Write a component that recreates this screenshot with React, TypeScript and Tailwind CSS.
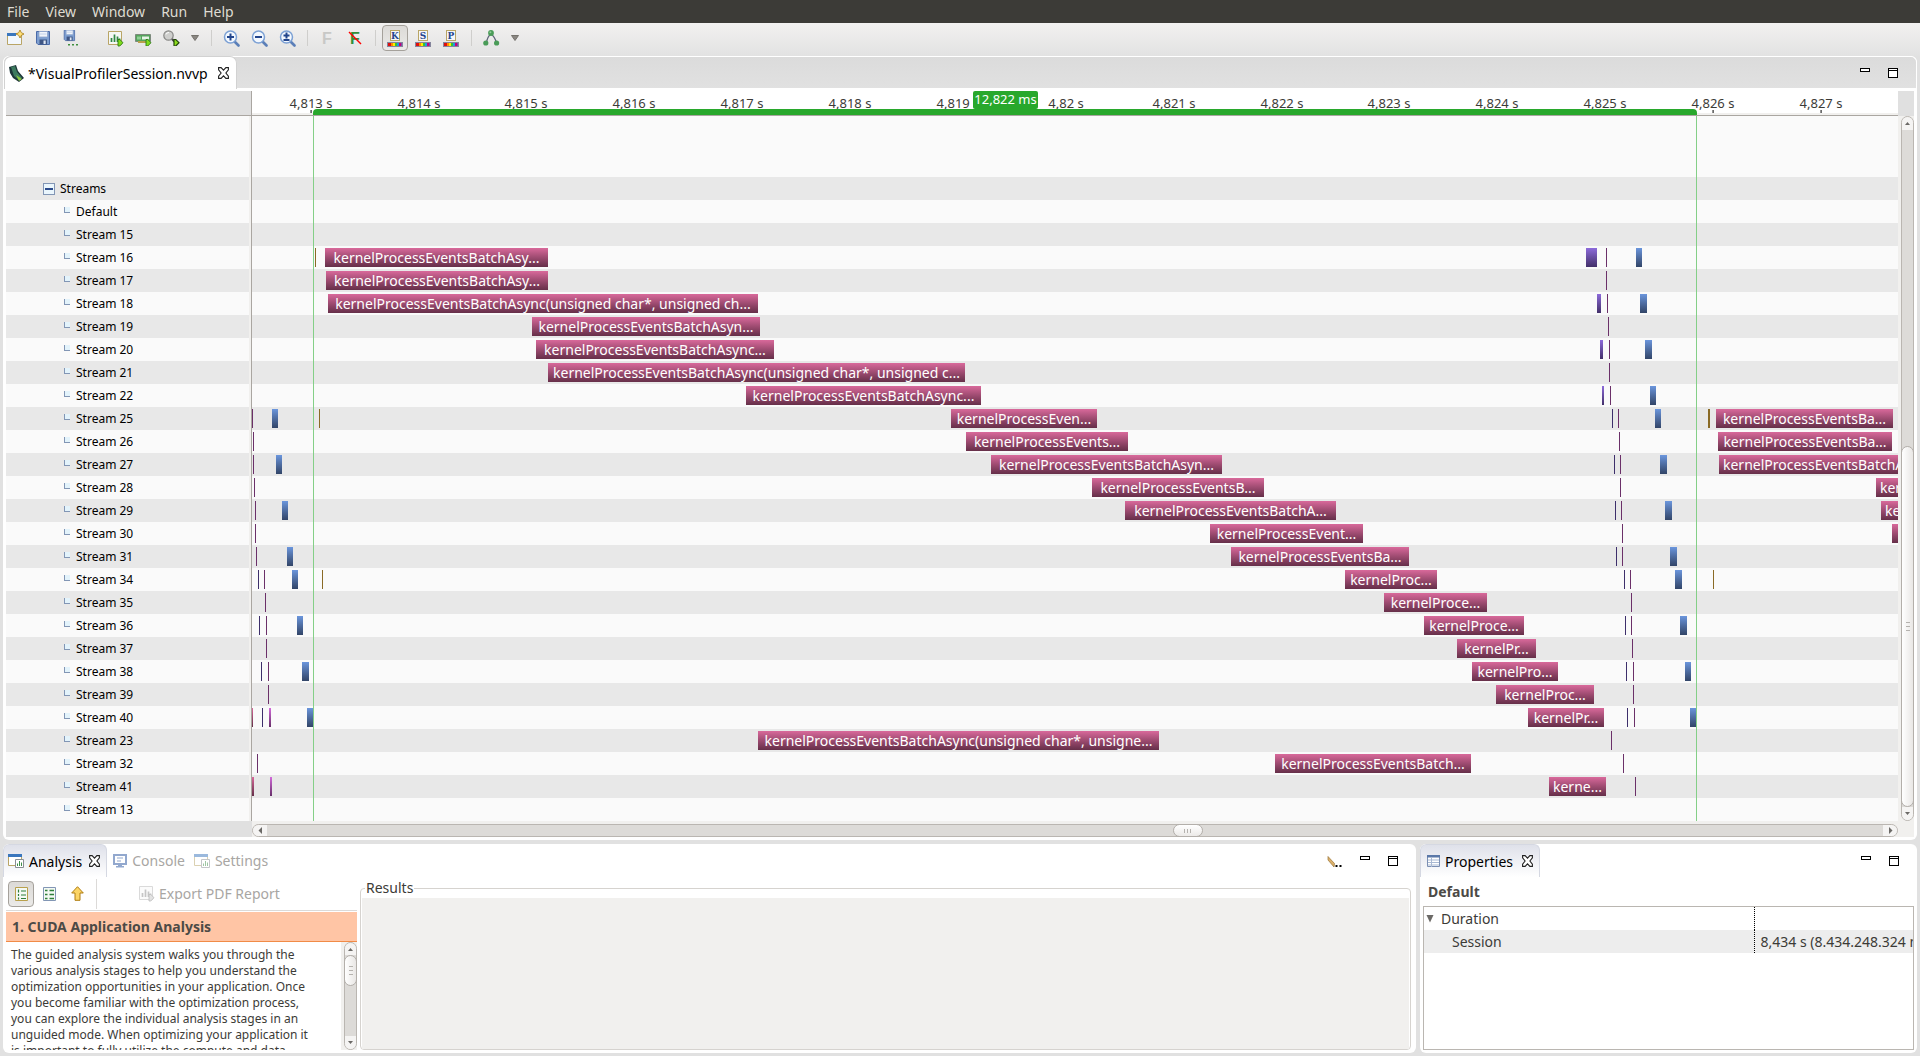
import React from "react";

type Kind = "kernel" | "h2d" | "d2h" | "memset" | "lineA" | "lineB" | "lineC";
type Bar = [start: number, end: number, kind: Kind, label?: string, align?: "left"];

const LANE_START = 252;
const LANE_SPAN = 1646;

const kindClass: Record<Kind, string> = {
  kernel: "bg-linear-to-b from-[#d9699b] to-[#662f49]",
  h2d: "bg-linear-to-b from-[#8d6bdb] to-[#43306a]",
  d2h: "bg-linear-to-b from-[#6b96dd] to-[#324568]",
  memset: "bg-linear-to-b from-[#d36bdb] to-[#682f6a]",
  lineA: "bg-[#6b3069]",
  lineB: "bg-[#3d2f6b]",
  lineC: "bg-[#8a6a25]",
};

const K = "kernelProcess";

const streams: { name: string; bars: Bar[] }[] = [
  { name: "Default", bars: [] },
  { name: "Stream 15", bars: [] },
  { name: "Stream 16", bars: [[315, 316, "lineC"], [325, 548, "kernel", K + "EventsBatchAsy..."], [1586, 1597, "h2d"], [1606, 1607, "lineA"], [1636, 1642, "d2h"]] },
  { name: "Stream 17", bars: [[326, 548, "kernel", K + "EventsBatchAsy..."], [1606, 1607, "lineA"]] },
  { name: "Stream 18", bars: [[328, 758, "kernel", K + "EventsBatchAsync(unsigned char*, unsigned ch..."], [1597, 1601, "h2d"], [1607, 1608, "lineA"], [1640, 1647, "d2h"]] },
  { name: "Stream 19", bars: [[532, 760, "kernel", K + "EventsBatchAsyn..."], [1608, 1609, "lineA"]] },
  { name: "Stream 20", bars: [[536, 774, "kernel", K + "EventsBatchAsync..."], [1600, 1603, "h2d"], [1609, 1610, "lineA"], [1645, 1652, "d2h"]] },
  { name: "Stream 21", bars: [[548, 965, "kernel", K + "EventsBatchAsync(unsigned char*, unsigned c..."], [1609, 1610, "lineA"]] },
  { name: "Stream 22", bars: [[746, 981, "kernel", K + "EventsBatchAsync..."], [1602, 1604, "h2d"], [1610, 1611, "lineA"], [1650, 1656, "d2h"]] },
  { name: "Stream 25", bars: [[252, 253, "lineA"], [272, 278, "d2h"], [319, 320, "lineC"], [951, 1097, "kernel", K + "Even..."], [1612, 1613, "lineB"], [1618, 1619, "lineA"], [1655, 1661, "d2h"], [1708, 1710, "lineC"], [1716, 1893, "kernel", K + "EventsBa..."]] },
  { name: "Stream 26", bars: [[253, 254, "lineA"], [966, 1128, "kernel", K + "Events..."], [1619, 1620, "lineA"], [1718, 1892, "kernel", K + "EventsBa..."]] },
  { name: "Stream 27", bars: [[253, 254, "lineA"], [276, 282, "d2h"], [991, 1222, "kernel", K + "EventsBatchAsyn..."], [1614, 1615, "lineB"], [1620, 1621, "lineA"], [1660, 1667, "d2h"], [1719, 1960, "kernel", K + "EventsBatchAsyn...", "left"]] },
  { name: "Stream 28", bars: [[254, 255, "lineA"], [1092, 1264, "kernel", K + "EventsB..."], [1620, 1621, "lineA"], [1876, 2040, "kernel", K + "EventsB...", "left"]] },
  { name: "Stream 29", bars: [[255, 256, "lineA"], [282, 288, "d2h"], [1125, 1336, "kernel", K + "EventsBatchA..."], [1615, 1616, "lineB"], [1621, 1622, "lineA"], [1665, 1672, "d2h"], [1881, 2040, "kernel", K + "Events...", "left"]] },
  { name: "Stream 30", bars: [[255, 256, "lineA"], [1210, 1363, "kernel", K + "Event..."], [1622, 1623, "lineA"], [1892, 2040, "kernel"]] },
  { name: "Stream 31", bars: [[256, 257, "lineA"], [287, 293, "d2h"], [1231, 1409, "kernel", K + "EventsBa..."], [1616, 1617, "lineB"], [1622, 1623, "lineA"], [1670, 1677, "d2h"]] },
  { name: "Stream 34", bars: [[258, 259, "lineB"], [264, 265, "lineA"], [292, 298, "d2h"], [322, 323, "lineC"], [1345, 1437, "kernel", "kernelProc..."], [1624, 1625, "lineB"], [1630, 1631, "lineA"], [1675, 1682, "d2h"], [1713, 1714, "lineC"]] },
  { name: "Stream 35", bars: [[265, 266, "lineA"], [1384, 1487, "kernel", "kernelProce..."], [1631, 1632, "lineA"]] },
  { name: "Stream 36", bars: [[259, 260, "lineB"], [266, 267, "lineA"], [297, 303, "d2h"], [1424, 1524, "kernel", "kernelProce..."], [1625, 1626, "lineB"], [1631, 1632, "lineA"], [1680, 1687, "d2h"]] },
  { name: "Stream 37", bars: [[266, 267, "lineA"], [1457, 1536, "kernel", "kernelPr..."], [1632, 1633, "lineA"]] },
  { name: "Stream 38", bars: [[261, 262, "lineB"], [268, 269, "lineA"], [302, 309, "d2h"], [1472, 1558, "kernel", "kernelPro..."], [1626, 1627, "lineB"], [1633, 1634, "lineA"], [1685, 1691, "d2h"]] },
  { name: "Stream 39", bars: [[268, 269, "lineA"], [1496, 1594, "kernel", "kernelProc..."], [1633, 1634, "lineA"]] },
  { name: "Stream 40", bars: [[252, 253, "kernel"], [262, 263, "lineB"], [269, 271, "memset"], [307, 313, "d2h"], [1528, 1604, "kernel", "kernelPr..."], [1627, 1628, "lineB"], [1634, 1635, "lineA"], [1690, 1696, "d2h"]] },
  { name: "Stream 23", bars: [[758, 1159, "kernel", K + "EventsBatchAsync(unsigned char*, unsigne..."], [1611, 1612, "lineA"]] },
  { name: "Stream 32", bars: [[257, 258, "lineA"], [1275, 1471, "kernel", K + "EventsBatch..."], [1623, 1624, "lineA"]] },
  { name: "Stream 41", bars: [[252, 254, "kernel"], [270, 272, "memset"], [1549, 1606, "kernel", "kerne..."], [1635, 1636, "lineA"]] },
  { name: "Stream 13", bars: [] },
];

const ticks: [number, string][] = [
  [311, "4,813 s"], [419, "4,814 s"], [526, "4,815 s"], [634, "4,816 s"], [742, "4,817 s"], [850, "4,818 s"],
  [958, "4,819 s"], [1066, "4,82 s"], [1174, "4,821 s"], [1282, "4,822 s"], [1389, "4,823 s"], [1497, "4,824 s"],
  [1605, "4,825 s"], [1713, "4,826 s"], [1821, "4,827 s"],
];

const pct = (x: number) => `${((x - LANE_START) / LANE_SPAN) * 100}%`;
const span = (a: number, b: number) => ({ left: pct(a), width: `${((b - a) / LANE_SPAN) * 100}%` });

function Tool({ label, active, disabled, children }: { label: string; active?: boolean; disabled?: boolean; children: React.ReactNode }) {
  return (
    <button
      type="button"
      aria-label={label}
      disabled={disabled}
      className={
        active
          ? "mx-px flex h-[26px] w-[26px] items-center justify-center rounded-[4px] border border-[#a5a19b] bg-linear-to-b from-[#dcdad7] to-[#ebeae8]"
          : "flex h-[26px] w-7 items-center justify-center"
      }
    >
      {children}
    </button>
  );
}

const Sep = () => (
  <span className="flex w-3 justify-center">
    <span className="h-4 w-px bg-[#cfcecc]" />
  </span>
);

const MenuArrow = ({ label }: { label: string }) => (
  <button type="button" aria-label={label} className="flex h-[26px] w-5 items-center justify-center">
    <svg width="8" height="6" viewBox="0 0 8 6"><path d="M.5.5h7L4 5.5z" fill="#8a8782" stroke="#75726d" /></svg>
  </button>
);

const Floppy = ({ small }: { small?: boolean }) => (
  <svg width="16" height="16" viewBox="0 0 16 16">
    <g transform={small ? "translate(0 -1) scale(.8)" : "translate(0 0)"}>
      <path d="M1.5 1.5h13v13H3l-1.5-1.5z" fill="#7e9fd0" stroke="#4a6aa8" />
      <path d="M4 1.5h8.5v5.5H4z" fill="#f1f5fb" stroke="#8fa5cc" strokeWidth=".8" />
      <path d="M5 4h6.5" stroke="#c4d2ea" />
      <path d="M4.5 9.5h7.5v5H4.5z" fill="#3f5684" />
      <path d="M8.5 10.5h2.200v3.5H8.5z" fill="#dfe7f3" />
    </g>
    {small && <path d="M5 14h2v1.600H5zM9 14h2v1.600H9zM13 14h2v1.600h-2z" fill="#3f8f3f" />}
  </svg>
);

const PlayBadge = () => <path d="M11 9.500h1.800L16 12.700 12.800 16H11z" fill="#7fdc1c" stroke="#2c7a16" strokeWidth=".9" />;

const ZoomIcon = ({ d }: { d: string }) => (
  <svg width="17" height="17" viewBox="0 0 17 17">
    <path d="M11.5 11.5L15.5 15.5" stroke="#5b7fb8" strokeWidth="2.600" strokeLinecap="round" />
    <circle cx="7.5" cy="7" r="6" fill="#f3f8fe" stroke="#7ba0d4" strokeWidth="1.500" />
    <path d={d} stroke="#22458c" strokeWidth="2" />
  </svg>
);

const ColorByIcon = ({ letter }: { letter: string }) => (
  <svg width="16" height="17" viewBox="0 0 16 17">
    <rect x="3.5" y=".5" width="9" height="10" fill="#f4f6fa" stroke="#b9a566" />
    <text x="8" y="9" textAnchor="middle" fontFamily="DejaVu Serif, serif" fontWeight="700" fontSize="9" fill="#25478f">{letter}</text>
    <rect x="0" y="12" width="16" height="5" fill="#85859c" />
    <path d="M1 13h3v3H1z" fill="#e00f0f" />
    <path d="M4 13h2v3H4z" fill="#ff8b00" />
    <path d="M6 13h2v3H6z" fill="#ffee00" />
    <path d="M8 13h2v3H8z" fill="#35c435" />
    <path d="M10 13h2v3h-2z" fill="#1c9be0" />
    <path d="M12 13h2v3h-2z" fill="#c4007a" />
    <path d="M14 13h1v3h-1z" fill="#7d4aa8" />
  </svg>
);

const FilterF = ({ on }: { on?: boolean }) => (
  <svg width="16" height="16" viewBox="0 0 16 16">
    <text x="8" y="14" textAnchor="middle" fontFamily="Liberation Sans, sans-serif" fontWeight="700" fontSize="16" fill={on ? "#2f8f3a" : "#c8c8c6"}>F</text>
    {on && <path d="M2 2L14 14" stroke="#f00" strokeWidth="1.400" />}
  </svg>
);

const CloseX = () => (
  <svg width="11" height="12" viewBox="0 0 11 12">
    <path d="M.6.6h2.500L5.500 3.200 7.900.6h2.500v2.300L7.900 6l2.500 3.100v2.300H7.900L5.500 8.800 3.100 11.400H.6V9.100L3.100 6 .6 2.900z" fill="#fff" stroke="#222" strokeWidth="1.100" />
  </svg>
);

const WindowButtons = () => (
  <div className="flex items-start gap-[18px] pr-[18px]">
    <button type="button" aria-label="Minimize" className="h-1 w-[10px] border border-black bg-white" />
    <button type="button" aria-label="Maximize" className="flex h-[10px] w-[10px] items-start border border-black bg-white pt-px">
      <span className="h-px w-full bg-black" />
    </button>
  </div>
);

const Arrow = ({ d }: { d: string }) => (
  <svg width="7" height="7" viewBox="0 0 7 7"><path d={d} fill="#6b6966" /></svg>
);

const UP = "M1 5h5L3.500 2z";
const DOWN = "M1 2h5L3.500 5z";
const LEFT = "M5 0v7L1.500 3.500z";
const RIGHT = "M2 0v7l3.500-3.500z";

const GripV = () => (
  <span className="flex flex-col gap-[3px]">
    <span className="h-px w-[4px] bg-[#b5b2ae]" />
    <span className="h-px w-[4px] bg-[#b5b2ae]" />
    <span className="h-px w-[4px] bg-[#b5b2ae]" />
  </span>
);

function AnalysisIcon({ faded }: { faded?: boolean }) {
  return (
    <svg width="16" height="14" viewBox="0 0 16 14" className={faded ? "opacity-50" : ""}>
      <path d="M.5.5h13v11H.5z" fill="#fff" stroke="#b9a566" />
      <path d="M0 0h14v3H0z" fill="#3a76bd" />
      <path d="M7.5 5.5h8v8h-8z" fill="#fff" stroke="#8a8f94" />
      <path d="M9.5 12V9.5M11.5 12V7M13.5 12V8.5" stroke="#3f8f4a" />
    </svg>
  );
}

function ReportIcon({ faded }: { faded?: boolean }) {
  return (
    <svg width="17" height="17" viewBox="0 0 17 17" className={faded ? "opacity-40 grayscale" : ""}>
      <path d="M1.5 1.5h13v13h-13z" fill="#f5f8f5" stroke="#b9a566" />
      <path d="M4.5 12V8M7.5 12V4.5M10.5 12V6.5M12.5 12V8.5" stroke="#2f8745" strokeWidth="1.700" />
      <PlayBadge />
    </svg>
  );
}

function ListIcon({ numbered }: { numbered?: boolean }) {
  return (
    <svg width="15" height="16" viewBox="0 0 15 16">
      <path d="M1.5 1.5h12v13h-12z" fill="#f4f9f4" stroke={numbered ? "#b9a04c" : "#8296b5"} />
      {numbered ? (
        <path d="M4.500 3.500v3M4.500 8v2M4.500 11.500v2M7 5h5M7 9h5M7 12.500h5" stroke="#2f7f3a" strokeWidth="1.200" />
      ) : (
        <path d="M3 4.500h2.500M3 8.500h2.500M3 12.500h2.500M7.500 4.500H12M7.500 8.500H12M7.500 12.500H12" stroke="#2f7f3a" strokeWidth="1.600" />
      )}
    </svg>
  );
}

export default function App() {
  return (
    <div className="flex min-h-screen flex-col overflow-hidden bg-[#e1e1e1] font-['Noto_Sans','Open_Sans',sans-serif] text-[14px] text-[#3c3b37]">
      <nav className="flex h-[23px] shrink-0 items-center gap-4 bg-[#3c3b37] pl-[7px] text-[#dfdbd2]">
        {["File", "View", "Window", "Run", "Help"].map((m) => (
          <button key={m} type="button">{m}</button>
        ))}
      </nav>

      <div role="toolbar" aria-label="Main" className="flex h-[33px] shrink-0 items-center bg-linear-to-b from-[#f2f1f0] to-[#e2e2e2] pb-[3px] pl-px">
        <Tool label="New session">
          <svg width="17" height="16" viewBox="0 0 17 16">
            <path d="M.5 3.500h14v11H.5z" fill="#f2f7fd" stroke="#b9a566" />
            <path d="M0 3h9v3H0z" fill="#3a76bd" />
            <path d="M13 0l1.300 2.700L17 4l-2.700 1.300L13 8l-1.300-2.700L9 4l2.700-1.300z" fill="#ffe27a" stroke="#a87a14" strokeWidth=".8" />
          </svg>
        </Tool>
        <Tool label="Save"><Floppy /></Tool>
        <Tool label="Save as"><Floppy small /></Tool>
        <span className="w-4" />
        <Tool label="Run report"><ReportIcon /></Tool>
        <Tool label="Run device">
          <svg width="17" height="16" viewBox="0 0 17 16">
            <path d="M.5 4.500h15v7H.5z" fill="#55a35c" stroke="#7d8a7d" />
            <path d="M7 6.500h7v3H7z" fill="#e7f3e7" />
            <path d="M2 6.500h4v3H2z" fill="#8fd094" />
            <path d="M3 12h8" stroke="#b9a04c" strokeWidth="2" />
            <PlayBadge />
          </svg>
        </Tool>
        <Tool label="Run analysis">
          <svg width="17" height="16" viewBox="0 0 17 16">
            <path d="M8.500 8.500L12 12" stroke="#444" strokeWidth="2.200" />
            <circle cx="5.500" cy="5.500" r="4.700" fill="#cfcfcd" stroke="#888886" strokeWidth="1.200" />
            <path d="M3 4.500a3 3 0 013-2" stroke="#fff" fill="none" />
            <path d="M11 9.500h1.800L16 12.700 12.800 16H11z" fill="#8cdc1c" stroke="#24470c" strokeWidth="1.200" />
          </svg>
        </Tool>
        <MenuArrow label="Analysis options" />
        <Sep />
        <Tool label="Zoom in"><ZoomIcon d="M4 7h7M7.500 3.500v7" /></Tool>
        <Tool label="Zoom out"><ZoomIcon d="M4 7h7" /></Tool>
        <Tool label="Zoom to fit"><ZoomIcon d="M4.500 5.500h6M7.500 2.500v6M4.500 10h6" /></Tool>
        <Sep />
        <Tool label="Filter" disabled><FilterF /></Tool>
        <Tool label="Clear filter"><FilterF on /></Tool>
        <Sep />
        <Tool label="Color by kernel" active><ColorByIcon letter="K" /></Tool>
        <Tool label="Color by stream"><ColorByIcon letter="S" /></Tool>
        <Tool label="Color by process"><ColorByIcon letter="P" /></Tool>
        <Sep />
        <Tool label="Dependencies">
          <svg width="17" height="16" viewBox="0 0 17 16">
            <path d="M8 4Q4 7 3.500 13M8 4q4 3 5.500 9" stroke="#5d6478" fill="none" strokeWidth="1.300" />
            <circle cx="8" cy="3" r="2.900" fill="#4a9c58" />
            <circle cx="2.800" cy="13" r="2.600" fill="#4a9c58" />
            <circle cx="13.600" cy="13" r="2.600" fill="#4a9c58" />
            <circle cx="7.400" cy="2.300" r="1" fill="#8fcb97" />
          </svg>
        </Tool>
        <MenuArrow label="Dependency options" />
      </div>

      <section className="mx-[3px] shrink-0 overflow-hidden rounded-[6px] bg-white">
        <header className="flex h-8 justify-between rounded-t-[6px] border-x border-t border-white bg-linear-to-b from-[#dbdbdb] to-[#e1e1e1]">
          <div className="-mt-px flex h-[33px] items-center gap-[10px] rounded-t-[7px] border border-b-0 border-[#d2d2d2] bg-white pr-[7px] pl-1 text-black">
            <span className="flex items-center gap-1">
              <svg width="15" height="17" viewBox="0 0 15 17">
                <path d="M0 2l7-2 2 6 6 7-5 4-6-4-3-5z" fill="#1d3638" />
                <path d="M2 2l4-1 2 6 5 6-3 2-5-4z" fill="#3d7a5e" />
                <path d="M7 10l6 4-3 2z" fill="#8cc63f" />
              </svg>
              *VisualProfilerSession.nvvp
            </span>
            <button type="button" aria-label="Close session"><CloseX /></button>
          </div>
          <div className="pt-[11px]"><WindowButtons /></div>
        </header>

        <div className="flex px-[3px] pt-[3px]">
          <div className="w-[243px] shrink-0">
            <div className="h-[25px] border-b border-[#aaa6a1] bg-[#e0e0e0]" />
            <div className="h-[61px] bg-[#fafafa]" />
            <div className="flex h-[23px] items-center gap-[5px] bg-[#e8e8e8] pl-[37px] text-[12px] text-black">
              <button type="button" aria-label="Collapse streams" className="flex h-3 w-3 items-center justify-center border border-[#8296b5] bg-[#eaf6fd]">
                <span className="h-0.5 w-2 bg-[#2b4a8b]" />
              </button>
              <span>Streams</span>
            </div>
            <ul>
              {streams.map((s) => (
                <li key={s.name} className="flex h-[23px] items-center gap-[6px] pl-[58px] text-[12px] text-black odd:bg-[#fafafa] even:bg-[#e8e8e8]">
                  <span className="mb-1 h-[6px] w-[6px] border-b border-l border-[#8296b5] bg-[#e3f3fb]" />
                  <span>{s.name}</span>
                </li>
              ))}
            </ul>
            <div className="h-4 bg-[#e0e0e0]" />
          </div>

          <div className="flex w-[3px] shrink-0 flex-col">
            <div className="h-[25px] border-r border-b border-[#aaa6a1] bg-[#e0e0e0]" />
            <div className="flex-1 border-r border-[#aaa6a1] bg-[#f1f0ee]" />
            <div className="h-4 bg-[#e0e0e0]" />
          </div>

          <div className="min-w-0 flex-1">
            <div className="relative h-[25px] overflow-hidden border-b border-[#aaa6a1] bg-white text-[13px]">
              <div className="absolute inset-x-0 bottom-0 h-0.5 bg-[#f1f0ee]" />
              {ticks.map(([x, t]) => (
                <div key={t} className="absolute top-0 flex -translate-x-1/2 flex-col items-center" style={{ left: pct(x) }}>
                  <span className="h-[19px] leading-6 whitespace-nowrap">{t}</span>
                  <span className="h-[3px] w-px bg-black" />
                </div>
              ))}
              <div className="absolute bottom-0 h-[6px] rounded-t-[4px] bg-[#28a82c]" style={span(313, 1697)} />
              <div className="absolute top-0 flex h-[18px] items-center justify-center rounded-[2px] bg-[#28a82c] whitespace-nowrap text-white" style={span(973, 1038)}>
                12,822 ms
              </div>
            </div>
            <div className="relative overflow-hidden bg-[#fafafa]">
              <div className="h-[61px]" />
              <div className="h-[23px] bg-[#e8e8e8]" />
              {streams.map((s, i) => (
                <div key={s.name} className={i % 2 ? "relative h-[23px] bg-[#e8e8e8]" : "relative h-[23px]"}>
                  {s.bars.map(([a, b, kind, label, align]) => (
                    <div
                      key={a}
                      className={`absolute top-0.5 flex h-[19px] items-center overflow-hidden whitespace-nowrap text-white ${align === "left" ? "pl-1" : "justify-center"} ${kindClass[kind]}`}
                      style={span(a, b)}
                    >
                      {label}
                    </div>
                  ))}
                </div>
              ))}
              <div className="absolute inset-y-0 w-px bg-[#84cf87]" style={{ left: pct(313) }} />
              <div className="absolute inset-y-0 w-px bg-[#84cf87]" style={{ left: pct(1696) }} />
            </div>
            <div className="bg-[#f1f0ee] pt-[3px]">
              <div className="relative flex h-[13px] items-center justify-between rounded-full border border-[#bab6b1] bg-[#dddbd8]">
                <button type="button" aria-label="Scroll left" className="flex h-full w-[14px] items-center justify-center rounded-l-full bg-[#f5f4f3]"><Arrow d={LEFT} /></button>
                <button type="button" aria-label="Scroll right" className="flex h-full w-[14px] items-center justify-center rounded-r-full bg-[#f5f4f3]"><Arrow d={RIGHT} /></button>
                <div className="absolute -inset-y-px flex w-[30px] items-center justify-center gap-0.5 rounded-full border border-[#b3afaa] bg-linear-to-b from-white to-[#eceae8]" style={{ left: pct(1173) }}>
                  <span className="h-1 w-px bg-[#b5b2ae]" />
                  <span className="h-1 w-px bg-[#b5b2ae]" />
                  <span className="h-1 w-px bg-[#b5b2ae]" />
                </div>
              </div>
            </div>
          </div>

          <div className="flex w-4 shrink-0 flex-col bg-[#f1f0ee]">
            <div className="h-[25px] bg-[#e0e0e0]" />
            <div className="ml-[3px] flex flex-1 flex-col rounded-full border border-[#bab6b1] bg-[#dddbd8]">
              <button type="button" aria-label="Scroll up" className="flex h-[13px] items-center justify-center rounded-t-full bg-[#f5f4f3]"><Arrow d={UP} /></button>
              <div className="flex-1" />
              <div className="-mx-px flex h-[361px] items-center justify-center rounded-full border border-[#b3afaa] bg-linear-to-r from-white to-[#e9e7e5]"><GripV /></div>
              <button type="button" aria-label="Scroll down" className="flex h-[13px] items-center justify-center rounded-b-full bg-[#f5f4f3]"><Arrow d={DOWN} /></button>
            </div>
            <div className="h-4" />
          </div>
        </div>
        <div className="h-[3px]" />
      </section>

      <div className="mx-[3px] mt-1 mb-[3px] flex min-h-[209px] flex-1 gap-1">
        <section className="flex min-w-0 flex-1 flex-col overflow-hidden rounded-[6px] bg-white">
          <header className="flex h-[33px] shrink-0 justify-between">
            <div className="flex">
              <div className="flex items-center gap-[5px] rounded-t-[6px] border border-b-0 border-[#d5d8e2] bg-linear-to-b from-[#dfe1ea] to-white px-1 pr-[6px] text-black">
                <AnalysisIcon />
                <span>Analysis</span>
                <button type="button" aria-label="Close analysis" className="ml-0.5"><CloseX /></button>
              </div>
              <button type="button" className="ml-[6px] flex items-center gap-[5px] text-[#a8a6a3]">
                <svg width="14" height="14" viewBox="0 0 14 14" className="opacity-60">
                  <path d="M1 1h12v9H1z" fill="#fff" stroke="#4a6fae" strokeWidth="2" />
                  <path d="M4 4h6M4 7h4" stroke="#4a6fae" />
                  <path d="M5 10h4v2h2v1.500H3V12h2z" fill="#4a6fae" />
                </svg>
                Console
              </button>
              <button type="button" className="ml-[9px] flex items-center gap-[5px] text-[#a8a6a3]">
                <AnalysisIcon faded />
                Settings
              </button>
            </div>
            <div className="flex pt-3">
              <button type="button" aria-label="Mark" className="mr-[17px] h-3">
                <svg width="16" height="12" viewBox="0 0 16 12">
                  <path d="M1 .5l6.500 7-.5 3.500L1 4z" fill="#dcb06a" stroke="#9a7436" strokeWidth=".7" />
                  <path d="M8.500 9h2v2h-2zM12.500 9h2v2h-2z" fill="#000" />
                </svg>
              </button>
              <WindowButtons />
            </div>
          </header>

          <div className="flex min-h-0 flex-1 gap-[3px] pr-[5px] pb-[3px] pl-[3px]">
            <div className="flex w-[351px] shrink-0 flex-col">
              <div className="flex h-[34px] shrink-0 items-center border-b border-[#dcdad8] pl-px">
                <Tool label="Guided analysis" active><ListIcon numbered /></Tool>
                <Tool label="Unguided analysis"><ListIcon /></Tool>
                <Tool label="Up">
                  <svg width="13" height="15" viewBox="0 0 13 15">
                    <path d="M6.500.7L12.300 7H9v7.300H4V7H.7z" fill="#fcd566" stroke="#b07c10" />
                  </svg>
                </Tool>
                <span className="ml-[5px] h-[30px] w-px bg-[#dcdad8]" />
                <button type="button" disabled className="ml-[41px] flex items-center gap-1 text-[#a8a6a3]">
                  <ReportIcon faded />
                  Export PDF Report
                </button>
              </div>
              <h2 className="mt-px flex h-[30px] shrink-0 items-center border-b border-[#f18b47] bg-[#ffc5a5] pl-[6px] font-bold text-[#4c4a46]">
                1. CUDA Application Analysis
              </h2>
              <div className="flex h-[108px] grow">
                <p className="min-w-0 flex-1 overflow-hidden pt-[5px] pl-[5px] text-[12px] leading-4 whitespace-pre">
                  {"The guided analysis system walks you through the\nvarious analysis stages to help you understand the\noptimization opportunities in your application. Once\nyou become familiar with the optimization process,\nyou can explore the individual analysis stages in an\nunguided mode. When optimizing your application it\nis important to fully utilize the compute and data"}
                </p>
                <div className="w-4 bg-[#f1f0ee] pl-[3px]">
                  <div className="flex h-full flex-col rounded-full border border-[#bab6b1] bg-[#dddbd8]">
                    <button type="button" aria-label="Scroll text up" className="flex h-3 items-center justify-center rounded-t-full bg-[#f5f4f3]"><Arrow d={UP} /></button>
                    <div className="-mx-px flex h-[31px] items-center justify-center rounded-full border border-[#b3afaa] bg-linear-to-r from-white to-[#e9e7e5]"><GripV /></div>
                    <div className="flex-1" />
                    <button type="button" aria-label="Scroll text down" className="flex h-[13px] items-center justify-center rounded-b-full bg-[#f5f4f3]"><Arrow d={DOWN} /></button>
                  </div>
                </div>
              </div>
            </div>

            <fieldset className="mt-px flex min-w-0 flex-1 flex-col rounded-[4px] border border-[#d6d3cf] px-px">
              <legend className="ml-[3px] h-5 px-px leading-5">Results</legend>
              <div className="flex-1 bg-[#f1f0ee]" />
            </fieldset>
          </div>
        </section>

        <section className="flex w-[497px] shrink-0 flex-col overflow-hidden rounded-[6px] bg-white px-[3px] pb-[3px]">
          <header className="-mx-[3px] flex h-[33px] shrink-0 justify-between">
            <div className="flex items-center gap-[5px] rounded-t-[6px] border border-b-0 border-[#d5d8e2] bg-linear-to-b from-[#dfe1ea] to-white px-[6px] text-black">
              <svg width="13" height="12" viewBox="0 0 13 12">
                <path d="M.5.5h12v11H.5z" fill="#fff" stroke="#7b8fb3" />
                <path d="M0 0h13v2.500H0z" fill="#5b78a8" />
                <path d="M1 5h11M1 7.500h11M1 10h11M4.500 3v9" stroke="#a9b9d3" />
              </svg>
              <span>Properties</span>
              <button type="button" aria-label="Close properties" className="ml-1"><CloseX /></button>
            </div>
            <div className="pt-3"><WindowButtons /></div>
          </header>
          <h2 className="flex h-[29px] shrink-0 items-center pl-[5px] font-bold text-[#4c4a46]">Default</h2>
          <div className="flex-1 overflow-hidden border border-[#bab6b1]">
            <table className="w-full table-fixed border-collapse">
              <tbody>
                <tr className="h-[23px]">
                  <td className="p-0 leading-[23px]">
                    <button type="button" className="flex items-center gap-[7px] pl-0.5">
                      <svg width="8" height="8" viewBox="0 0 8 8"><path d="M.5 0h7L4 7.500z" fill="#6b6966" /></svg>
                      Duration
                    </button>
                  </td>
                  <td className="w-[159px] border-l border-dotted border-black p-0" />
                </tr>
                <tr className="h-[23px] bg-[#ededed]">
                  <td className="p-0 pl-7 leading-[23px]">Session</td>
                  <td className="overflow-hidden border-l border-dotted border-black p-0 pl-[6px] leading-[23px] whitespace-nowrap">8,434 s (8.434.248.324 ns)</td>
                </tr>
              </tbody>
            </table>
          </div>
        </section>
      </div>
    </div>
  );
}
